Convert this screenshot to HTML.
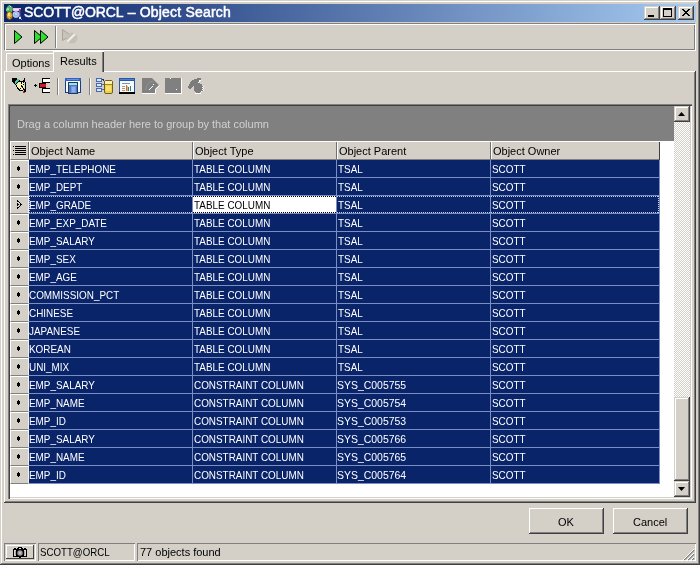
<!DOCTYPE html><html><head><meta charset='utf-8'><style>
*{margin:0;padding:0;box-sizing:border-box}
body{will-change:transform}html,body{width:700px;height:565px;overflow:hidden;background:#d4d0c8;font-family:"Liberation Sans",sans-serif;font-size:11px;color:#000;position:relative}
.a{position:absolute}
.t{position:absolute;white-space:nowrap;line-height:13px}
.row{position:absolute;left:29px;width:630px;height:17px;background:#0a246a;}
.cell{position:absolute;top:1px;height:17px;color:#fff;white-space:nowrap;line-height:17px;transform:scaleX(0.9);transform-origin:0 0}
.vl{position:absolute;top:0;width:1px;height:17px;background:#7a8ec4}
.hl{position:absolute;left:29px;width:631px;height:1px;background:#7a8ec4}
.ind{position:absolute;left:10px;width:19px;height:18px;background:#d4d0c8;border-top:1px solid #fff;border-left:1px solid #fff;border-bottom:1px solid #808080;border-right:1px solid #f0f0f0}
.hdr{position:absolute;top:141px;height:19px;background:#d4d0c8;border-top:1px solid #fff;border-left:1px solid #fff;border-bottom:1px solid #808080;border-right:1px solid #808080;line-height:19px;white-space:nowrap;padding-left:1px}
.btn{position:absolute;background:#d4d0c8;box-shadow:inset -1px -1px #404040, inset 1px 1px #fff, inset -2px -2px #808080, inset 2px 2px #d4d0c8;}
.btn2{position:absolute;background:#d4d0c8;box-shadow:inset -1px -1px #404040, inset 1px 1px #d4d0c8, inset -2px -2px #808080, inset 2px 2px #fff;}
</style></head><body><div class="a" style="left:0;top:0;width:700px;height:565px;box-shadow:inset -1px -1px #404040, inset 1px 1px #d4d0c8, inset -2px -2px #808080, inset 2px 2px #fff"></div>
<div class="a" style="left:4px;top:4px;width:692px;height:18px;background:linear-gradient(to right,#0a246a,#a6caf0)"></div>
<div class="t" style="left:24px;top:4px;font-size:14px;line-height:16px;color:#fff;letter-spacing:0.2px;-webkit-text-stroke:0.5px #fff"><span style="letter-spacing:-0.1px">SCOTT@ORCL</span> &#8211; Object Search</div>
<div class="btn2" style="left:644px;top:6px;width:16px;height:14px"></div>
<div class="btn2" style="left:660px;top:6px;width:16px;height:14px"></div>
<div class="btn2" style="left:678px;top:6px;width:16px;height:14px"></div>
<div class="a" style="left:4px;top:23px;width:691px;height:27px;border:1px solid #808080"></div>
<div class="a" style="left:5px;top:24px;width:691px;height:27px;border:1px solid #fff"></div>
<div class="a" style="left:4px;top:71px;width:692px;height:432px;box-shadow:inset -1px -1px #404040, inset 1px 1px #fff, inset -2px -2px #808080"></div>
<div class="a" style="left:6px;top:53px;width:49px;height:19px;border-top:1px solid #fff;border-left:1px solid #fff"></div>
<div class="t" style="left:12px;top:57px">Options</div>
<div class="a" style="left:53px;top:51px;width:51px;height:21px;background:#d4d0c8;border-top:1px solid #fff;border-left:1px solid #fff;box-shadow:inset -1px 0 #404040, inset -2px 0 #808080"></div>
<div class="t" style="left:60px;top:55px">Results</div>
<div class="a" style="left:8px;top:104px;width:684px;height:395px;background:#fff;box-shadow:inset 1px 1px #808080, inset 2px 2px #404040, inset -1px -1px #fff, inset -2px -2px #d4d0c8"></div>
<div class="a" style="left:10px;top:106px;width:664px;height:35px;background:#808080"></div>
<div class="t" style="left:17px;top:118px;color:#d0d0d0">Drag a column header here to group by that column</div>
<div class="a" style="left:10px;top:141px;width:650px;height:19px;background:#d4d0c8;border-top:1px solid #fff;border-left:1px solid #fff;border-bottom:1px solid #808080"></div>
<div class="a" style="left:28px;top:142px;width:1px;height:17px;background:#707070"></div>
<div class="a" style="left:29px;top:142px;width:1px;height:17px;background:#fff"></div>
<div class="a" style="left:192px;top:142px;width:1px;height:17px;background:#707070"></div>
<div class="a" style="left:193px;top:142px;width:1px;height:17px;background:#fff"></div>
<div class="a" style="left:336px;top:142px;width:1px;height:17px;background:#707070"></div>
<div class="a" style="left:337px;top:142px;width:1px;height:17px;background:#fff"></div>
<div class="a" style="left:490px;top:142px;width:1px;height:17px;background:#707070"></div>
<div class="a" style="left:491px;top:142px;width:1px;height:17px;background:#fff"></div>
<div class="a" style="left:659px;top:142px;width:1px;height:18px;background:#404040"></div>
<div class="t" style="left:31px;top:145px">Object Name</div>
<div class="t" style="left:195px;top:145px">Object Type</div>
<div class="t" style="left:339px;top:145px">Object Parent</div>
<div class="t" style="left:493px;top:145px">Object Owner</div>
<div class="ind" style="top:160px"></div>
<div class="row" style="top:160px">
<div class="cell" style="left:0px">EMP_TELEPHONE</div>
<div class="vl" style="left:163px"></div>
<div class="cell" style="left:165px">TABLE COLUMN</div>
<div class="vl" style="left:307px"></div>
<div class="cell" style="left:309px">TSAL</div>
<div class="vl" style="left:461px"></div>
<div class="cell" style="left:463px">SCOTT</div>
</div>
<div class="hl" style="top:177px"></div>
<div class="a" style="left:659px;top:160px;width:1px;height:18px;background:#7a8ec4"></div>
<div class="a" style="left:18px;top:166px;width:1px;height:5px;background:#000"></div>
<div class="a" style="left:17px;top:167px;width:3px;height:3px;background:#000"></div>
<div class="ind" style="top:178px"></div>
<div class="row" style="top:178px">
<div class="cell" style="left:0px">EMP_DEPT</div>
<div class="vl" style="left:163px"></div>
<div class="cell" style="left:165px">TABLE COLUMN</div>
<div class="vl" style="left:307px"></div>
<div class="cell" style="left:309px">TSAL</div>
<div class="vl" style="left:461px"></div>
<div class="cell" style="left:463px">SCOTT</div>
</div>
<div class="hl" style="top:195px"></div>
<div class="a" style="left:659px;top:178px;width:1px;height:18px;background:#7a8ec4"></div>
<div class="a" style="left:18px;top:184px;width:1px;height:5px;background:#000"></div>
<div class="a" style="left:17px;top:185px;width:3px;height:3px;background:#000"></div>
<div class="ind" style="top:196px"></div>
<div class="row" style="top:196px">
<div class="cell" style="left:0px">EMP_GRADE</div>
<div class="vl" style="left:163px"></div>
<div class="a" style="left:164px;top:0;width:143px;height:17px;background:#fff"></div>
<div class="cell" style="left:165px;color:#000">TABLE COLUMN</div>
<div class="vl" style="left:307px"></div>
<div class="cell" style="left:309px">TSAL</div>
<div class="vl" style="left:461px"></div>
<div class="cell" style="left:463px">SCOTT</div>
<div class="a" style="left:0;top:0;width:630px;height:1px;background:repeating-linear-gradient(to right,#c8d0e8 0 1px,transparent 1px 2px)"></div>
<div class="a" style="left:0;top:16px;width:630px;height:1px;background:repeating-linear-gradient(to right,#c8d0e8 0 1px,transparent 1px 2px)"></div>
<div class="a" style="left:164px;top:0;width:143px;height:1px;background:repeating-linear-gradient(to right,#000 0 1px,#fff 1px 2px)"></div>
<div class="a" style="left:164px;top:16px;width:143px;height:1px;background:repeating-linear-gradient(to right,#000 0 1px,#fff 1px 2px)"></div>
<div class="a" style="left:0;top:0;width:1px;height:17px;background:repeating-linear-gradient(to bottom,#c8d0e8 0 1px,transparent 1px 2px)"></div>
<div class="a" style="left:629px;top:0;width:1px;height:17px;background:repeating-linear-gradient(to bottom,#c8d0e8 0 1px,transparent 1px 2px)"></div>
</div>
<div class="hl" style="top:213px"></div>
<div class="a" style="left:659px;top:196px;width:1px;height:18px;background:#7a8ec4"></div>
<div class="a" style="left:17px;top:200px;width:1px;height:1px;background:#000"></div>
<div class="a" style="left:17px;top:201px;width:1px;height:1px;background:#000"></div>
<div class="a" style="left:18px;top:201px;width:1px;height:1px;background:#000"></div>
<div class="a" style="left:19px;top:202px;width:1px;height:1px;background:#000"></div>
<div class="a" style="left:17px;top:203px;width:1px;height:1px;background:#000"></div>
<div class="a" style="left:20px;top:203px;width:1px;height:1px;background:#000"></div>
<div class="a" style="left:17px;top:204px;width:1px;height:1px;background:#000"></div>
<div class="a" style="left:18px;top:204px;width:1px;height:1px;background:#000"></div>
<div class="a" style="left:20px;top:204px;width:1px;height:1px;background:#000"></div>
<div class="a" style="left:21px;top:204px;width:1px;height:1px;background:#000"></div>
<div class="a" style="left:17px;top:205px;width:1px;height:1px;background:#000"></div>
<div class="a" style="left:20px;top:205px;width:1px;height:1px;background:#000"></div>
<div class="a" style="left:19px;top:206px;width:1px;height:1px;background:#000"></div>
<div class="a" style="left:17px;top:207px;width:1px;height:1px;background:#000"></div>
<div class="a" style="left:18px;top:207px;width:1px;height:1px;background:#000"></div>
<div class="a" style="left:17px;top:208px;width:1px;height:1px;background:#000"></div>
<div class="ind" style="top:214px"></div>
<div class="row" style="top:214px">
<div class="cell" style="left:0px">EMP_EXP_DATE</div>
<div class="vl" style="left:163px"></div>
<div class="cell" style="left:165px">TABLE COLUMN</div>
<div class="vl" style="left:307px"></div>
<div class="cell" style="left:309px">TSAL</div>
<div class="vl" style="left:461px"></div>
<div class="cell" style="left:463px">SCOTT</div>
</div>
<div class="hl" style="top:231px"></div>
<div class="a" style="left:659px;top:214px;width:1px;height:18px;background:#7a8ec4"></div>
<div class="a" style="left:18px;top:220px;width:1px;height:5px;background:#000"></div>
<div class="a" style="left:17px;top:221px;width:3px;height:3px;background:#000"></div>
<div class="ind" style="top:232px"></div>
<div class="row" style="top:232px">
<div class="cell" style="left:0px">EMP_SALARY</div>
<div class="vl" style="left:163px"></div>
<div class="cell" style="left:165px">TABLE COLUMN</div>
<div class="vl" style="left:307px"></div>
<div class="cell" style="left:309px">TSAL</div>
<div class="vl" style="left:461px"></div>
<div class="cell" style="left:463px">SCOTT</div>
</div>
<div class="hl" style="top:249px"></div>
<div class="a" style="left:659px;top:232px;width:1px;height:18px;background:#7a8ec4"></div>
<div class="a" style="left:18px;top:238px;width:1px;height:5px;background:#000"></div>
<div class="a" style="left:17px;top:239px;width:3px;height:3px;background:#000"></div>
<div class="ind" style="top:250px"></div>
<div class="row" style="top:250px">
<div class="cell" style="left:0px">EMP_SEX</div>
<div class="vl" style="left:163px"></div>
<div class="cell" style="left:165px">TABLE COLUMN</div>
<div class="vl" style="left:307px"></div>
<div class="cell" style="left:309px">TSAL</div>
<div class="vl" style="left:461px"></div>
<div class="cell" style="left:463px">SCOTT</div>
</div>
<div class="hl" style="top:267px"></div>
<div class="a" style="left:659px;top:250px;width:1px;height:18px;background:#7a8ec4"></div>
<div class="a" style="left:18px;top:256px;width:1px;height:5px;background:#000"></div>
<div class="a" style="left:17px;top:257px;width:3px;height:3px;background:#000"></div>
<div class="ind" style="top:268px"></div>
<div class="row" style="top:268px">
<div class="cell" style="left:0px">EMP_AGE</div>
<div class="vl" style="left:163px"></div>
<div class="cell" style="left:165px">TABLE COLUMN</div>
<div class="vl" style="left:307px"></div>
<div class="cell" style="left:309px">TSAL</div>
<div class="vl" style="left:461px"></div>
<div class="cell" style="left:463px">SCOTT</div>
</div>
<div class="hl" style="top:285px"></div>
<div class="a" style="left:659px;top:268px;width:1px;height:18px;background:#7a8ec4"></div>
<div class="a" style="left:18px;top:274px;width:1px;height:5px;background:#000"></div>
<div class="a" style="left:17px;top:275px;width:3px;height:3px;background:#000"></div>
<div class="ind" style="top:286px"></div>
<div class="row" style="top:286px">
<div class="cell" style="left:0px">COMMISSION_PCT</div>
<div class="vl" style="left:163px"></div>
<div class="cell" style="left:165px">TABLE COLUMN</div>
<div class="vl" style="left:307px"></div>
<div class="cell" style="left:309px">TSAL</div>
<div class="vl" style="left:461px"></div>
<div class="cell" style="left:463px">SCOTT</div>
</div>
<div class="hl" style="top:303px"></div>
<div class="a" style="left:659px;top:286px;width:1px;height:18px;background:#7a8ec4"></div>
<div class="a" style="left:18px;top:292px;width:1px;height:5px;background:#000"></div>
<div class="a" style="left:17px;top:293px;width:3px;height:3px;background:#000"></div>
<div class="ind" style="top:304px"></div>
<div class="row" style="top:304px">
<div class="cell" style="left:0px">CHINESE</div>
<div class="vl" style="left:163px"></div>
<div class="cell" style="left:165px">TABLE COLUMN</div>
<div class="vl" style="left:307px"></div>
<div class="cell" style="left:309px">TSAL</div>
<div class="vl" style="left:461px"></div>
<div class="cell" style="left:463px">SCOTT</div>
</div>
<div class="hl" style="top:321px"></div>
<div class="a" style="left:659px;top:304px;width:1px;height:18px;background:#7a8ec4"></div>
<div class="a" style="left:18px;top:310px;width:1px;height:5px;background:#000"></div>
<div class="a" style="left:17px;top:311px;width:3px;height:3px;background:#000"></div>
<div class="ind" style="top:322px"></div>
<div class="row" style="top:322px">
<div class="cell" style="left:0px">JAPANESE</div>
<div class="vl" style="left:163px"></div>
<div class="cell" style="left:165px">TABLE COLUMN</div>
<div class="vl" style="left:307px"></div>
<div class="cell" style="left:309px">TSAL</div>
<div class="vl" style="left:461px"></div>
<div class="cell" style="left:463px">SCOTT</div>
</div>
<div class="hl" style="top:339px"></div>
<div class="a" style="left:659px;top:322px;width:1px;height:18px;background:#7a8ec4"></div>
<div class="a" style="left:18px;top:328px;width:1px;height:5px;background:#000"></div>
<div class="a" style="left:17px;top:329px;width:3px;height:3px;background:#000"></div>
<div class="ind" style="top:340px"></div>
<div class="row" style="top:340px">
<div class="cell" style="left:0px">KOREAN</div>
<div class="vl" style="left:163px"></div>
<div class="cell" style="left:165px">TABLE COLUMN</div>
<div class="vl" style="left:307px"></div>
<div class="cell" style="left:309px">TSAL</div>
<div class="vl" style="left:461px"></div>
<div class="cell" style="left:463px">SCOTT</div>
</div>
<div class="hl" style="top:357px"></div>
<div class="a" style="left:659px;top:340px;width:1px;height:18px;background:#7a8ec4"></div>
<div class="a" style="left:18px;top:346px;width:1px;height:5px;background:#000"></div>
<div class="a" style="left:17px;top:347px;width:3px;height:3px;background:#000"></div>
<div class="ind" style="top:358px"></div>
<div class="row" style="top:358px">
<div class="cell" style="left:0px">UNI_MIX</div>
<div class="vl" style="left:163px"></div>
<div class="cell" style="left:165px">TABLE COLUMN</div>
<div class="vl" style="left:307px"></div>
<div class="cell" style="left:309px">TSAL</div>
<div class="vl" style="left:461px"></div>
<div class="cell" style="left:463px">SCOTT</div>
</div>
<div class="hl" style="top:375px"></div>
<div class="a" style="left:659px;top:358px;width:1px;height:18px;background:#7a8ec4"></div>
<div class="a" style="left:18px;top:364px;width:1px;height:5px;background:#000"></div>
<div class="a" style="left:17px;top:365px;width:3px;height:3px;background:#000"></div>
<div class="ind" style="top:376px"></div>
<div class="row" style="top:376px">
<div class="cell" style="left:0px">EMP_SALARY</div>
<div class="vl" style="left:163px"></div>
<div class="cell" style="left:165px">CONSTRAINT COLUMN</div>
<div class="vl" style="left:307px"></div>
<div class="cell" style="left:308px;transform:scaleX(0.95)">SYS_C005755</div>
<div class="vl" style="left:461px"></div>
<div class="cell" style="left:463px">SCOTT</div>
</div>
<div class="hl" style="top:393px"></div>
<div class="a" style="left:659px;top:376px;width:1px;height:18px;background:#7a8ec4"></div>
<div class="a" style="left:18px;top:382px;width:1px;height:5px;background:#000"></div>
<div class="a" style="left:17px;top:383px;width:3px;height:3px;background:#000"></div>
<div class="ind" style="top:394px"></div>
<div class="row" style="top:394px">
<div class="cell" style="left:0px">EMP_NAME</div>
<div class="vl" style="left:163px"></div>
<div class="cell" style="left:165px">CONSTRAINT COLUMN</div>
<div class="vl" style="left:307px"></div>
<div class="cell" style="left:308px;transform:scaleX(0.95)">SYS_C005754</div>
<div class="vl" style="left:461px"></div>
<div class="cell" style="left:463px">SCOTT</div>
</div>
<div class="hl" style="top:411px"></div>
<div class="a" style="left:659px;top:394px;width:1px;height:18px;background:#7a8ec4"></div>
<div class="a" style="left:18px;top:400px;width:1px;height:5px;background:#000"></div>
<div class="a" style="left:17px;top:401px;width:3px;height:3px;background:#000"></div>
<div class="ind" style="top:412px"></div>
<div class="row" style="top:412px">
<div class="cell" style="left:0px">EMP_ID</div>
<div class="vl" style="left:163px"></div>
<div class="cell" style="left:165px">CONSTRAINT COLUMN</div>
<div class="vl" style="left:307px"></div>
<div class="cell" style="left:308px;transform:scaleX(0.95)">SYS_C005753</div>
<div class="vl" style="left:461px"></div>
<div class="cell" style="left:463px">SCOTT</div>
</div>
<div class="hl" style="top:429px"></div>
<div class="a" style="left:659px;top:412px;width:1px;height:18px;background:#7a8ec4"></div>
<div class="a" style="left:18px;top:418px;width:1px;height:5px;background:#000"></div>
<div class="a" style="left:17px;top:419px;width:3px;height:3px;background:#000"></div>
<div class="ind" style="top:430px"></div>
<div class="row" style="top:430px">
<div class="cell" style="left:0px">EMP_SALARY</div>
<div class="vl" style="left:163px"></div>
<div class="cell" style="left:165px">CONSTRAINT COLUMN</div>
<div class="vl" style="left:307px"></div>
<div class="cell" style="left:308px;transform:scaleX(0.95)">SYS_C005766</div>
<div class="vl" style="left:461px"></div>
<div class="cell" style="left:463px">SCOTT</div>
</div>
<div class="hl" style="top:447px"></div>
<div class="a" style="left:659px;top:430px;width:1px;height:18px;background:#7a8ec4"></div>
<div class="a" style="left:18px;top:436px;width:1px;height:5px;background:#000"></div>
<div class="a" style="left:17px;top:437px;width:3px;height:3px;background:#000"></div>
<div class="ind" style="top:448px"></div>
<div class="row" style="top:448px">
<div class="cell" style="left:0px">EMP_NAME</div>
<div class="vl" style="left:163px"></div>
<div class="cell" style="left:165px">CONSTRAINT COLUMN</div>
<div class="vl" style="left:307px"></div>
<div class="cell" style="left:308px;transform:scaleX(0.95)">SYS_C005765</div>
<div class="vl" style="left:461px"></div>
<div class="cell" style="left:463px">SCOTT</div>
</div>
<div class="hl" style="top:465px"></div>
<div class="a" style="left:659px;top:448px;width:1px;height:18px;background:#7a8ec4"></div>
<div class="a" style="left:18px;top:454px;width:1px;height:5px;background:#000"></div>
<div class="a" style="left:17px;top:455px;width:3px;height:3px;background:#000"></div>
<div class="ind" style="top:466px"></div>
<div class="row" style="top:466px">
<div class="cell" style="left:0px">EMP_ID</div>
<div class="vl" style="left:163px"></div>
<div class="cell" style="left:165px">CONSTRAINT COLUMN</div>
<div class="vl" style="left:307px"></div>
<div class="cell" style="left:308px;transform:scaleX(0.95)">SYS_C005764</div>
<div class="vl" style="left:461px"></div>
<div class="cell" style="left:463px">SCOTT</div>
</div>
<div class="hl" style="top:483px"></div>
<div class="a" style="left:659px;top:466px;width:1px;height:18px;background:#7a8ec4"></div>
<div class="a" style="left:18px;top:472px;width:1px;height:5px;background:#000"></div>
<div class="a" style="left:17px;top:473px;width:3px;height:3px;background:#000"></div>
<div class="a" style="left:674px;top:106px;width:16px;height:391px;background-color:#fff;background-image:repeating-conic-gradient(#d4d0c8 0 25%,#fff 0 50%);background-size:2px 2px"></div>
<div class="btn2" style="left:674px;top:106px;width:16px;height:16px"></div>
<div class="btn2" style="left:674px;top:397px;width:16px;height:84px"></div>
<div class="btn2" style="left:674px;top:481px;width:16px;height:16px"></div>
<div class="btn" style="left:529px;top:508px;width:75px;height:26px"></div>
<div class="t" style="left:558px;top:516px">OK</div>
<div class="btn" style="left:613px;top:508px;width:75px;height:26px"></div>
<div class="t" style="left:633px;top:516px">Cancel</div>
<div class="a" style="left:4px;top:543px;width:32px;height:18px;box-shadow:inset 1px 1px #808080, inset -1px -1px #fff"></div>
<div class="btn" style="left:6px;top:545px;width:28px;height:14px;box-shadow:inset -1px -1px #404040, inset 1px 1px #fff"></div>
<div class="a" style="left:38px;top:543px;width:97px;height:18px;box-shadow:inset 1px 1px #808080, inset -1px -1px #fff"></div>
<div class="t" style="left:40px;top:546px;transform:scaleX(0.88);transform-origin:0 0">SCOTT@ORCL</div>
<div class="a" style="left:137px;top:543px;width:559px;height:18px;box-shadow:inset 1px 1px #808080, inset -1px -1px #fff"></div>
<div class="t" style="left:140px;top:546px">77 objects found</div>
<svg class="a" style="left:0;top:0" width="700" height="565" viewBox="0 0 700 565"><polygon points="9,5 10,5 11,7 12,6 13,9 12,12 7,12 6,9 7,7 8,6" fill="#58b868"/><rect x="7" y="8" width="2" height="2" fill="#98e0a8"/><rect x="10" y="6" width="1" height="1" fill="#c8f0c8"/><rect x="6" y="9" width="1" height="2" fill="#70c8c0"/><ellipse cx="9.5" cy="15.5" rx="3" ry="4" fill="#e0b040" stroke="#604010" stroke-width="0.8"/><rect x="8" y="13" width="2" height="3" fill="#f8e070"/><rect x="10" y="17" width="1" height="1" fill="#a07020"/><rect x="8" y="18" width="1" height="1" fill="#a07020"/><rect x="13" y="8" width="8" height="3" fill="#f0c0e0"/><rect x="14" y="9" width="6" height="1" fill="#f8e0f0"/><rect x="19" y="9" width="2" height="8" fill="#8050a8"/><rect x="20" y="10" width="1" height="6" fill="#503080"/><circle cx="16" cy="14.5" r="3" fill="#90b8f0" stroke="#d0e0ff" stroke-width="0.8"/><rect x="15" y="13" width="2" height="2" fill="#b8d8ff"/><rect x="19" y="17" width="2" height="2" fill="#e8f0f8"/><rect x="21" y="19" width="1" height="1" fill="#8090a0"/><rect x="648" y="15" width="6" height="2" fill="#000"/><rect x="663" y="8" width="9" height="9" fill="#000"/><rect x="664" y="10" width="7" height="6" fill="#d4d0c8"/><rect x="682" y="9" width="1" height="1" fill="#000"/><rect x="683" y="9" width="1" height="1" fill="#000"/><rect x="688" y="9" width="1" height="1" fill="#000"/><rect x="689" y="9" width="1" height="1" fill="#000"/><rect x="683" y="10" width="1" height="1" fill="#000"/><rect x="684" y="10" width="1" height="1" fill="#000"/><rect x="687" y="10" width="1" height="1" fill="#000"/><rect x="688" y="10" width="1" height="1" fill="#000"/><rect x="684" y="11" width="1" height="1" fill="#000"/><rect x="685" y="11" width="1" height="1" fill="#000"/><rect x="686" y="11" width="1" height="1" fill="#000"/><rect x="687" y="11" width="1" height="1" fill="#000"/><rect x="685" y="12" width="1" height="1" fill="#000"/><rect x="686" y="12" width="1" height="1" fill="#000"/><rect x="684" y="13" width="1" height="1" fill="#000"/><rect x="685" y="13" width="1" height="1" fill="#000"/><rect x="686" y="13" width="1" height="1" fill="#000"/><rect x="687" y="13" width="1" height="1" fill="#000"/><rect x="683" y="14" width="1" height="1" fill="#000"/><rect x="684" y="14" width="1" height="1" fill="#000"/><rect x="687" y="14" width="1" height="1" fill="#000"/><rect x="688" y="14" width="1" height="1" fill="#000"/><rect x="682" y="15" width="1" height="1" fill="#000"/><rect x="683" y="15" width="1" height="1" fill="#000"/><rect x="688" y="15" width="1" height="1" fill="#000"/><rect x="689" y="15" width="1" height="1" fill="#000"/><polygon points="14.5,30.5 22,37 14.5,43.5" fill="#2ee02e" stroke="#000" stroke-width="1"/><polygon points="34.5,30.5 42,37 34.5,43.5" fill="#2ee02e" stroke="#000" stroke-width="1"/><polygon points="40.5,30.5 48,37 40.5,43.5" fill="#2ee02e" stroke="#000" stroke-width="1"/><rect x="55" y="26" width="1" height="22" fill="#808080"/><rect x="56" y="26" width="1" height="22" fill="#fff"/><polygon points="62.5,29.5 71,35.5 62.5,40.5" fill="#c8c4bc" stroke="#a8a49c" stroke-width="1"/><circle cx="72" cy="38" r="5.5" fill="#c4c0b8"/><path d="M67.5,41.5 L75,34" stroke="#f0efea" stroke-width="2"/><rect x="12" y="78" width="1" height="1" fill="#000"/><rect x="13" y="78" width="1" height="1" fill="#000"/><rect x="14" y="78" width="1" height="1" fill="#000"/><rect x="15" y="78" width="1" height="1" fill="#000"/><rect x="16" y="78" width="1" height="1" fill="#000"/><rect x="24" y="78" width="1" height="1" fill="#000"/><rect x="12" y="79" width="1" height="1" fill="#000"/><rect x="13" y="79" width="1" height="1" fill="#000"/><rect x="14" y="79" width="1" height="1" fill="#000"/><rect x="15" y="79" width="1" height="1" fill="#000"/><rect x="16" y="79" width="1" height="1" fill="#000"/><rect x="17" y="79" width="1" height="1" fill="#48c8b0"/><rect x="18" y="79" width="1" height="1" fill="#48c8b0"/><rect x="24" y="79" width="1" height="1" fill="#000"/><rect x="12" y="80" width="1" height="1" fill="#000"/><rect x="13" y="80" width="1" height="1" fill="#000"/><rect x="14" y="80" width="1" height="1" fill="#000"/><rect x="15" y="80" width="1" height="1" fill="#000"/><rect x="16" y="80" width="1" height="1" fill="#48c8b0"/><rect x="17" y="80" width="1" height="1" fill="#48c8b0"/><rect x="18" y="80" width="1" height="1" fill="#48c8b0"/><rect x="19" y="80" width="1" height="1" fill="#000"/><rect x="23" y="80" width="1" height="1" fill="#000"/><rect x="24" y="80" width="1" height="1" fill="#000"/><rect x="12" y="81" width="1" height="1" fill="#000"/><rect x="13" y="81" width="1" height="1" fill="#000"/><rect x="14" y="81" width="1" height="1" fill="#000"/><rect x="15" y="81" width="1" height="1" fill="#48c8b0"/><rect x="16" y="81" width="1" height="1" fill="#48c8b0"/><rect x="17" y="81" width="1" height="1" fill="#48c8b0"/><rect x="18" y="81" width="1" height="1" fill="#000"/><rect x="19" y="81" width="1" height="1" fill="#000"/><rect x="20" y="81" width="1" height="1" fill="#000"/><rect x="21" y="81" width="1" height="1" fill="#000"/><rect x="22" y="81" width="1" height="1" fill="#000"/><rect x="23" y="81" width="1" height="1" fill="#000"/><rect x="24" y="81" width="1" height="1" fill="#000"/><rect x="13" y="82" width="1" height="1" fill="#000"/><rect x="14" y="82" width="1" height="1" fill="#000"/><rect x="15" y="82" width="1" height="1" fill="#48c8b0"/><rect x="16" y="82" width="1" height="1" fill="#48c8b0"/><rect x="17" y="82" width="1" height="1" fill="#000"/><rect x="18" y="82" width="1" height="1" fill="#c8f0a0"/><rect x="19" y="82" width="1" height="1" fill="#f4f4b0"/><rect x="20" y="82" width="1" height="1" fill="#f4f4b0"/><rect x="21" y="82" width="1" height="1" fill="#000"/><rect x="22" y="82" width="1" height="1" fill="#f4f4b0"/><rect x="23" y="82" width="1" height="1" fill="#000"/><rect x="25" y="82" width="1" height="1" fill="#000"/><rect x="14" y="83" width="1" height="1" fill="#000"/><rect x="15" y="83" width="1" height="1" fill="#48c8b0"/><rect x="16" y="83" width="1" height="1" fill="#000"/><rect x="17" y="83" width="1" height="1" fill="#c8f0a0"/><rect x="18" y="83" width="1" height="1" fill="#f4f4b0"/><rect x="19" y="83" width="1" height="1" fill="#f4f4b0"/><rect x="20" y="83" width="1" height="1" fill="#f4f4b0"/><rect x="21" y="83" width="1" height="1" fill="#000"/><rect x="22" y="83" width="1" height="1" fill="#f4f4b0"/><rect x="23" y="83" width="1" height="1" fill="#f4f4b0"/><rect x="25" y="83" width="1" height="1" fill="#000"/><rect x="15" y="84" width="1" height="1" fill="#000"/><rect x="16" y="84" width="1" height="1" fill="#c8f0a0"/><rect x="17" y="84" width="1" height="1" fill="#f4f4b0"/><rect x="18" y="84" width="1" height="1" fill="#f4f4b0"/><rect x="19" y="84" width="1" height="1" fill="#f4f4b0"/><rect x="20" y="84" width="1" height="1" fill="#f4f4b0"/><rect x="21" y="84" width="1" height="1" fill="#f4f4b0"/><rect x="22" y="84" width="1" height="1" fill="#f4f4b0"/><rect x="23" y="84" width="1" height="1" fill="#000"/><rect x="25" y="84" width="1" height="1" fill="#000"/><rect x="16" y="85" width="1" height="1" fill="#000"/><rect x="17" y="85" width="1" height="1" fill="#f4f4b0"/><rect x="18" y="85" width="1" height="1" fill="#f4f4b0"/><rect x="19" y="85" width="1" height="1" fill="#f4f4b0"/><rect x="20" y="85" width="1" height="1" fill="#f4f4b0"/><rect x="21" y="85" width="1" height="1" fill="#000"/><rect x="22" y="85" width="1" height="1" fill="#f4f4b0"/><rect x="23" y="85" width="1" height="1" fill="#f4f4b0"/><rect x="25" y="85" width="1" height="1" fill="#000"/><rect x="16" y="86" width="1" height="1" fill="#000"/><rect x="17" y="86" width="1" height="1" fill="#f4f4b0"/><rect x="18" y="86" width="1" height="1" fill="#f4f4b0"/><rect x="19" y="86" width="1" height="1" fill="#f4f4b0"/><rect x="20" y="86" width="1" height="1" fill="#f4f4b0"/><rect x="21" y="86" width="1" height="1" fill="#000"/><rect x="22" y="86" width="1" height="1" fill="#000"/><rect x="23" y="86" width="1" height="1" fill="#f4f4b0"/><rect x="25" y="86" width="1" height="1" fill="#000"/><rect x="17" y="87" width="1" height="1" fill="#000"/><rect x="18" y="87" width="1" height="1" fill="#f4f4b0"/><rect x="19" y="87" width="1" height="1" fill="#f4f4b0"/><rect x="20" y="87" width="1" height="1" fill="#f4f4b0"/><rect x="21" y="87" width="1" height="1" fill="#f4f4b0"/><rect x="22" y="87" width="1" height="1" fill="#000"/><rect x="23" y="87" width="1" height="1" fill="#f4f4b0"/><rect x="25" y="87" width="1" height="1" fill="#000"/><rect x="17" y="88" width="1" height="1" fill="#000"/><rect x="18" y="88" width="1" height="1" fill="#000"/><rect x="19" y="88" width="1" height="1" fill="#f4f4b0"/><rect x="20" y="88" width="1" height="1" fill="#000"/><rect x="21" y="88" width="1" height="1" fill="#f4f4b0"/><rect x="22" y="88" width="1" height="1" fill="#f4f4b0"/><rect x="23" y="88" width="1" height="1" fill="#000"/><rect x="25" y="88" width="1" height="1" fill="#000"/><rect x="18" y="89" width="1" height="1" fill="#000"/><rect x="19" y="89" width="1" height="1" fill="#000"/><rect x="20" y="89" width="1" height="1" fill="#f4f4b0"/><rect x="21" y="89" width="1" height="1" fill="#f4f4b0"/><rect x="22" y="89" width="1" height="1" fill="#f4f4b0"/><rect x="23" y="89" width="1" height="1" fill="#000"/><rect x="24" y="89" width="1" height="1" fill="#000"/><rect x="25" y="89" width="1" height="1" fill="#000"/><rect x="19" y="90" width="1" height="1" fill="#000"/><rect x="20" y="90" width="1" height="1" fill="#000"/><rect x="21" y="90" width="1" height="1" fill="#000"/><rect x="22" y="90" width="1" height="1" fill="#000"/><rect x="24" y="90" width="1" height="1" fill="#000"/><rect x="25" y="90" width="1" height="1" fill="#000"/><rect x="23" y="91" width="1" height="1" fill="#a03020"/><rect x="24" y="91" width="1" height="1" fill="#000"/><rect x="25" y="91" width="1" height="1" fill="#000"/><rect x="23" y="92" width="1" height="1" fill="#a03020"/><rect x="24" y="92" width="1" height="1" fill="#a03020"/><rect x="34" y="85" width="3" height="1" fill="#000"/><rect x="35" y="84" width="1" height="3" fill="#000"/><rect x="37" y="84" width="1" height="3" fill="#90d0c0"/><rect x="42" y="78" width="8" height="1" fill="#000"/><rect x="42" y="78" width="1" height="5" fill="#000"/><rect x="43" y="79" width="7" height="3" fill="#fff"/><rect x="42" y="82" width="8" height="1" fill="#000"/><rect x="42" y="88" width="8" height="1" fill="#000"/><rect x="42" y="88" width="1" height="5" fill="#000"/><rect x="43" y="89" width="7" height="3" fill="#fff"/><rect x="42" y="92" width="8" height="1" fill="#000"/><rect x="39" y="83" width="7" height="5" fill="#200000"/><rect x="40" y="84" width="6" height="3" fill="#d01828"/><rect x="46" y="84" width="2" height="3" fill="#f0b8b0"/><rect x="57" y="78" width="1" height="17" fill="#808080"/><rect x="58" y="78" width="1" height="17" fill="#fff"/><rect x="65" y="78" width="16" height="15" fill="#1c3c88"/><rect x="65" y="78" width="16" height="3" fill="#3060c0"/><rect x="67" y="79" width="12" height="1" fill="#6890e0"/><rect x="66" y="81" width="14" height="11" fill="#f4fbff"/><rect x="68" y="82" width="10" height="12" fill="#203860"/><rect x="69" y="83" width="8" height="10" fill="#5078c0"/><rect x="69" y="83" width="8" height="2" fill="#a0e0e8"/><rect x="71" y="86" width="5" height="7" fill="#7098e0"/><rect x="72" y="87" width="3" height="5" fill="#88b0f0"/><rect x="89" y="78" width="1" height="17" fill="#808080"/><rect x="90" y="78" width="1" height="17" fill="#fff"/><rect x="96" y="78" width="6" height="4" fill="#4868b0"/><rect x="97" y="79" width="4" height="2" fill="#d8e8ff"/><rect x="96" y="83" width="6" height="4" fill="#4868b0"/><rect x="97" y="84" width="4" height="2" fill="#d8e8ff"/><rect x="96" y="88" width="6" height="4" fill="#4868b0"/><rect x="97" y="89" width="4" height="2" fill="#d8e8ff"/><rect x="102" y="79" width="2" height="1" fill="#303030"/><rect x="103" y="80" width="1" height="1" fill="#303030"/><rect x="104" y="81" width="1" height="1" fill="#303030"/><rect x="102" y="84" width="2" height="1" fill="#4868b0"/><rect x="102" y="89" width="2" height="1" fill="#4868b0"/><rect x="104.5" y="80.5" width="8" height="13" rx="1.5" fill="#f0d048" stroke="#706020" stroke-width="1"/><rect x="105" y="81" width="7" height="3" fill="#f8f0b0"/><rect x="105" y="84" width="7" height="1" fill="#a08830"/><rect x="106" y="86" width="5" height="5" fill="#f8e070"/><rect x="119" y="78" width="16" height="16" fill="#2858a0"/><rect x="120" y="79" width="14" height="1" fill="#5080d0"/><rect x="120" y="81" width="14" height="11" fill="#f4fcff"/><rect x="119" y="92" width="16" height="2" fill="#000"/><rect x="122" y="83" width="8" height="1" fill="#8890b0"/><rect x="122" y="86" width="3" height="1" fill="#c89060"/><rect x="122" y="88" width="3" height="1" fill="#c89060"/><rect x="122" y="90" width="3" height="1" fill="#c89060"/><rect x="126" y="85" width="1" height="6" fill="#b87838"/><rect x="127" y="86" width="1" height="5" fill="#e0b080"/><rect x="128" y="87" width="1" height="4" fill="#407870"/><rect x="130" y="86" width="1" height="5" fill="#407870"/><polygon points="142,78 152,78 159,85 155,89 155,93 142,93" fill="#808080"/><path d="M142,93.5 H155.5 V89.5 L159.5,85.5" stroke="#fff" stroke-width="1" fill="none"/><path d="M149,90 L153,86" stroke="#fff" stroke-width="1"/><rect x="153" y="84" width="1" height="1" fill="#fff"/><path d="M146,90 Q146,82 153,81" stroke="#909090" stroke-width="1" fill="none"/><rect x="165" y="78" width="16" height="15" fill="#808080"/><rect x="170" y="78" width="1" height="1" fill="#fff"/><rect x="176" y="89" width="1" height="1" fill="#fff"/><rect x="165" y="93" width="17" height="1" fill="#fff"/><rect x="181" y="78" width="1" height="15" fill="#fff"/><rect x="197" y="78" width="1" height="1" fill="#7c7c7c"/><rect x="198" y="78" width="1" height="1" fill="#7c7c7c"/><rect x="199" y="78" width="1" height="1" fill="#7c7c7c"/><rect x="200" y="78" width="1" height="1" fill="#7c7c7c"/><rect x="194" y="79" width="1" height="1" fill="#7c7c7c"/><rect x="195" y="79" width="1" height="1" fill="#7c7c7c"/><rect x="196" y="79" width="1" height="1" fill="#7c7c7c"/><rect x="197" y="79" width="1" height="1" fill="#7c7c7c"/><rect x="198" y="79" width="1" height="1" fill="#7c7c7c"/><rect x="199" y="79" width="1" height="1" fill="#7c7c7c"/><rect x="200" y="79" width="1" height="1" fill="#7c7c7c"/><rect x="192" y="80" width="1" height="1" fill="#7c7c7c"/><rect x="193" y="80" width="1" height="1" fill="#7c7c7c"/><rect x="194" y="80" width="1" height="1" fill="#7c7c7c"/><rect x="195" y="80" width="1" height="1" fill="#7c7c7c"/><rect x="196" y="80" width="1" height="1" fill="#7c7c7c"/><rect x="197" y="80" width="1" height="1" fill="#7c7c7c"/><rect x="198" y="80" width="1" height="1" fill="#7c7c7c"/><rect x="199" y="80" width="1" height="1" fill="#fff"/><rect x="200" y="80" width="1" height="1" fill="#fff"/><rect x="191" y="81" width="1" height="1" fill="#7c7c7c"/><rect x="192" y="81" width="1" height="1" fill="#7c7c7c"/><rect x="193" y="81" width="1" height="1" fill="#7c7c7c"/><rect x="194" y="81" width="1" height="1" fill="#7c7c7c"/><rect x="195" y="81" width="1" height="1" fill="#7c7c7c"/><rect x="196" y="81" width="1" height="1" fill="#7c7c7c"/><rect x="197" y="81" width="1" height="1" fill="#7c7c7c"/><rect x="198" y="81" width="1" height="1" fill="#7c7c7c"/><rect x="199" y="81" width="1" height="1" fill="#fff"/><rect x="190" y="82" width="1" height="1" fill="#7c7c7c"/><rect x="191" y="82" width="1" height="1" fill="#7c7c7c"/><rect x="192" y="82" width="1" height="1" fill="#7c7c7c"/><rect x="193" y="82" width="1" height="1" fill="#7c7c7c"/><rect x="194" y="82" width="1" height="1" fill="#7c7c7c"/><rect x="195" y="82" width="1" height="1" fill="#7c7c7c"/><rect x="196" y="82" width="1" height="1" fill="#7c7c7c"/><rect x="197" y="82" width="1" height="1" fill="#7c7c7c"/><rect x="198" y="82" width="1" height="1" fill="#fff"/><rect x="190" y="83" width="1" height="1" fill="#7c7c7c"/><rect x="191" y="83" width="1" height="1" fill="#7c7c7c"/><rect x="192" y="83" width="1" height="1" fill="#7c7c7c"/><rect x="193" y="83" width="1" height="1" fill="#7c7c7c"/><rect x="194" y="83" width="1" height="1" fill="#7c7c7c"/><rect x="195" y="83" width="1" height="1" fill="#7c7c7c"/><rect x="196" y="83" width="1" height="1" fill="#7c7c7c"/><rect x="197" y="83" width="1" height="1" fill="#7c7c7c"/><rect x="198" y="83" width="1" height="1" fill="#7c7c7c"/><rect x="199" y="83" width="1" height="1" fill="#7c7c7c"/><rect x="189" y="84" width="1" height="1" fill="#7c7c7c"/><rect x="190" y="84" width="1" height="1" fill="#7c7c7c"/><rect x="191" y="84" width="1" height="1" fill="#7c7c7c"/><rect x="192" y="84" width="1" height="1" fill="#7c7c7c"/><rect x="193" y="84" width="1" height="1" fill="#7c7c7c"/><rect x="194" y="84" width="1" height="1" fill="#7c7c7c"/><rect x="195" y="84" width="1" height="1" fill="#7c7c7c"/><rect x="196" y="84" width="1" height="1" fill="#7c7c7c"/><rect x="197" y="84" width="1" height="1" fill="#7c7c7c"/><rect x="198" y="84" width="1" height="1" fill="#7c7c7c"/><rect x="199" y="84" width="1" height="1" fill="#7c7c7c"/><rect x="200" y="84" width="1" height="1" fill="#7c7c7c"/><rect x="201" y="84" width="1" height="1" fill="#7c7c7c"/><rect x="189" y="85" width="1" height="1" fill="#7c7c7c"/><rect x="190" y="85" width="1" height="1" fill="#7c7c7c"/><rect x="191" y="85" width="1" height="1" fill="#7c7c7c"/><rect x="192" y="85" width="1" height="1" fill="#7c7c7c"/><rect x="193" y="85" width="1" height="1" fill="#7c7c7c"/><rect x="194" y="85" width="1" height="1" fill="#7c7c7c"/><rect x="195" y="85" width="1" height="1" fill="#7c7c7c"/><rect x="196" y="85" width="1" height="1" fill="#7c7c7c"/><rect x="197" y="85" width="1" height="1" fill="#7c7c7c"/><rect x="198" y="85" width="1" height="1" fill="#7c7c7c"/><rect x="199" y="85" width="1" height="1" fill="#7c7c7c"/><rect x="200" y="85" width="1" height="1" fill="#7c7c7c"/><rect x="201" y="85" width="1" height="1" fill="#7c7c7c"/><rect x="188" y="86" width="1" height="1" fill="#7c7c7c"/><rect x="189" y="86" width="1" height="1" fill="#7c7c7c"/><rect x="190" y="86" width="1" height="1" fill="#7c7c7c"/><rect x="191" y="86" width="1" height="1" fill="#7c7c7c"/><rect x="192" y="86" width="1" height="1" fill="#7c7c7c"/><rect x="194" y="86" width="1" height="1" fill="#7c7c7c"/><rect x="195" y="86" width="1" height="1" fill="#7c7c7c"/><rect x="196" y="86" width="1" height="1" fill="#7c7c7c"/><rect x="197" y="86" width="1" height="1" fill="#7c7c7c"/><rect x="198" y="86" width="1" height="1" fill="#7c7c7c"/><rect x="199" y="86" width="1" height="1" fill="#7c7c7c"/><rect x="200" y="86" width="1" height="1" fill="#7c7c7c"/><rect x="201" y="86" width="1" height="1" fill="#7c7c7c"/><rect x="202" y="86" width="1" height="1" fill="#7c7c7c"/><rect x="203" y="86" width="1" height="1" fill="#fff"/><rect x="188" y="87" width="1" height="1" fill="#7c7c7c"/><rect x="189" y="87" width="1" height="1" fill="#7c7c7c"/><rect x="190" y="87" width="1" height="1" fill="#7c7c7c"/><rect x="191" y="87" width="1" height="1" fill="#7c7c7c"/><rect x="194" y="87" width="1" height="1" fill="#7c7c7c"/><rect x="195" y="87" width="1" height="1" fill="#7c7c7c"/><rect x="196" y="87" width="1" height="1" fill="#7c7c7c"/><rect x="197" y="87" width="1" height="1" fill="#7c7c7c"/><rect x="198" y="87" width="1" height="1" fill="#7c7c7c"/><rect x="199" y="87" width="1" height="1" fill="#7c7c7c"/><rect x="200" y="87" width="1" height="1" fill="#7c7c7c"/><rect x="201" y="87" width="1" height="1" fill="#7c7c7c"/><rect x="202" y="87" width="1" height="1" fill="#fff"/><rect x="189" y="88" width="1" height="1" fill="#7c7c7c"/><rect x="190" y="88" width="1" height="1" fill="#7c7c7c"/><rect x="194" y="88" width="1" height="1" fill="#7c7c7c"/><rect x="195" y="88" width="1" height="1" fill="#7c7c7c"/><rect x="196" y="88" width="1" height="1" fill="#7c7c7c"/><rect x="197" y="88" width="1" height="1" fill="#7c7c7c"/><rect x="198" y="88" width="1" height="1" fill="#7c7c7c"/><rect x="199" y="88" width="1" height="1" fill="#7c7c7c"/><rect x="200" y="88" width="1" height="1" fill="#7c7c7c"/><rect x="201" y="88" width="1" height="1" fill="#7c7c7c"/><rect x="202" y="88" width="1" height="1" fill="#7c7c7c"/><rect x="203" y="88" width="1" height="1" fill="#fff"/><rect x="194" y="89" width="1" height="1" fill="#7c7c7c"/><rect x="195" y="89" width="1" height="1" fill="#7c7c7c"/><rect x="196" y="89" width="1" height="1" fill="#7c7c7c"/><rect x="197" y="89" width="1" height="1" fill="#7c7c7c"/><rect x="198" y="89" width="1" height="1" fill="#7c7c7c"/><rect x="199" y="89" width="1" height="1" fill="#7c7c7c"/><rect x="200" y="89" width="1" height="1" fill="#7c7c7c"/><rect x="201" y="89" width="1" height="1" fill="#7c7c7c"/><rect x="202" y="89" width="1" height="1" fill="#fff"/><rect x="194" y="90" width="1" height="1" fill="#7c7c7c"/><rect x="195" y="90" width="1" height="1" fill="#7c7c7c"/><rect x="196" y="90" width="1" height="1" fill="#7c7c7c"/><rect x="197" y="90" width="1" height="1" fill="#7c7c7c"/><rect x="198" y="90" width="1" height="1" fill="#7c7c7c"/><rect x="199" y="90" width="1" height="1" fill="#7c7c7c"/><rect x="200" y="90" width="1" height="1" fill="#7c7c7c"/><rect x="201" y="90" width="1" height="1" fill="#7c7c7c"/><rect x="202" y="90" width="1" height="1" fill="#7c7c7c"/><rect x="203" y="90" width="1" height="1" fill="#fff"/><rect x="195" y="91" width="1" height="1" fill="#7c7c7c"/><rect x="196" y="91" width="1" height="1" fill="#7c7c7c"/><rect x="197" y="91" width="1" height="1" fill="#7c7c7c"/><rect x="198" y="91" width="1" height="1" fill="#7c7c7c"/><rect x="199" y="91" width="1" height="1" fill="#7c7c7c"/><rect x="200" y="91" width="1" height="1" fill="#7c7c7c"/><rect x="201" y="91" width="1" height="1" fill="#fff"/><rect x="196" y="92" width="1" height="1" fill="#7c7c7c"/><rect x="197" y="92" width="1" height="1" fill="#7c7c7c"/><rect x="198" y="92" width="1" height="1" fill="#7c7c7c"/><rect x="199" y="92" width="1" height="1" fill="#7c7c7c"/><rect x="195" y="93" width="1" height="1" fill="#fff"/><rect x="196" y="93" width="1" height="1" fill="#fff"/><rect x="197" y="93" width="1" height="1" fill="#fff"/><rect x="198" y="93" width="1" height="1" fill="#fff"/><rect x="199" y="93" width="1" height="1" fill="#fff"/><rect x="200" y="93" width="1" height="1" fill="#fff"/><rect x="15" y="146" width="11" height="1" fill="#000"/><rect x="15" y="148" width="11" height="1" fill="#000"/><rect x="15" y="150" width="11" height="1" fill="#000"/><rect x="15" y="152" width="11" height="1" fill="#000"/><rect x="15" y="154" width="11" height="1" fill="#000"/><rect x="13" y="146" width="1" height="1" fill="#000"/><rect x="13" y="150" width="1" height="1" fill="#000"/><rect x="13" y="154" width="1" height="1" fill="#000"/><polygon points="678,116 685,116 681.5,112" fill="#000"/><polygon points="678,487 685,487 681.5,491" fill="#000"/><path d="M684,560 L694,550" stroke="#808080" stroke-width="1.5"/><path d="M683,560 L694,549" stroke="#fff" stroke-width="1"/><path d="M688,560 L694,554" stroke="#808080" stroke-width="1.5"/><path d="M687,560 L694,553" stroke="#fff" stroke-width="1"/><path d="M692,560 L694,558" stroke="#808080" stroke-width="1.5"/><path d="M691,560 L694,557" stroke="#fff" stroke-width="1"/><rect x="18" y="547" width="4" height="1" fill="#000"/><rect x="17" y="548" width="6" height="1" fill="#000"/><rect x="19" y="548" width="2" height="1" fill="#e8e8e8"/><rect x="14" y="548" width="2" height="1" fill="#000"/><rect x="24" y="548" width="2" height="1" fill="#000"/><rect x="13" y="549" width="14" height="8" fill="#000"/><rect x="14" y="550" width="2" height="6" fill="#d8d8d8"/><rect x="24" y="550" width="2" height="6" fill="#d8d8d8"/><rect x="15" y="551" width="1" height="4" fill="#a8a8a8"/><rect x="24" y="551" width="1" height="4" fill="#a8a8a8"/><circle cx="20" cy="553" r="2.7" fill="#a0a0a0"/><rect x="19" y="552" width="2" height="2" fill="#c0c0c0"/><rect x="19" y="557" width="2" height="1" fill="#000"/></svg></body></html>
